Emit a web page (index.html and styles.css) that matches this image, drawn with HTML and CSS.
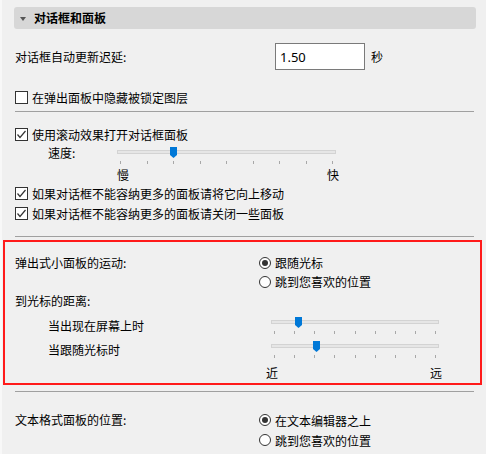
FILE: index.html
```html
<!DOCTYPE html>
<html lang="zh-CN">
<head>
    <meta charset="UTF-8">
    <meta name="viewport" content="width=device-width, initial-scale=1.0">
    <title>对话框和面板</title>
    <link rel="stylesheet" href="styles.css">
</head>
<body>
    <div class="panel">
        <div class="section-head"><span class="caret"></span>对话框和面板</div>

        <div class="delay-row">
            <span class="delay-label">对话框自动更新迟延:</span>
            <input class="num" type="text" value="1.50">
            <span class="unit">秒</span>
        </div>

        <label class="check row-a"><span class="box"></span>在弹出面板中隐藏被锁定图层</label>

        <div class="sep sep-1"></div>

        <label class="check row-b"><span class="box on"><svg viewBox="0 0 11 11"><polyline points="1.5,5.5 4,8.5 9.5,2"/></svg></span>使用滚动效果打开对话框面板</label>

        <div class="slider-row speed">
            <span class="slider-label speed-label">速度:</span>
            <div class="slider wide">
                <div class="slider-track">
                    <div class="rail"></div>
                    <div class="thumb" style="left: 53px"><svg viewBox="0 0 7 11"><polygon points="0,0 7,0 7,8 3.5,11 0,8"/></svg></div>
                </div>
                <div class="ticks"><i></i><i></i><i></i><i></i><i></i><i></i><i></i><i></i><i></i></div>
            </div>
        </div>
        <div class="scale speed-scale"><span>慢</span><span>快</span></div>

        <label class="check"><span class="box on"><svg viewBox="0 0 11 11"><polyline points="1.5,5.5 4,8.5 9.5,2"/></svg></span>如果对话框不能容纳更多的面板请将它向上移动</label>
        <label class="check"><span class="box on"><svg viewBox="0 0 11 11"><polyline points="1.5,5.5 4,8.5 9.5,2"/></svg></span>如果对话框不能容纳更多的面板请关闭一些面板</label>

        <div class="sep sep-2"></div>

        <div class="highlight">
            <div class="choice-grid">
                <span class="choice-label">弹出式小面板的运动:</span>
                <div class="radios">
                    <label class="radio-row"><span class="radio on"></span>跟随光标</label>
                    <label class="radio-row"><span class="radio"></span>跳到您喜欢的位置</label>
                </div>
            </div>

            <div class="plain-row">到光标的距离:</div>

            <div class="slider-row dist">
                <span class="slider-label dist-label">当出现在屏幕上时</span>
                <div class="slider narrow">
                    <div class="slider-track">
                        <div class="rail"></div>
                        <div class="thumb" style="left: 24px"><svg viewBox="0 0 7 11"><polygon points="0,0 7,0 7,8 3.5,11 0,8"/></svg></div>
                    </div>
                    <div class="ticks"><i></i><i></i><i></i><i></i><i></i><i></i><i></i><i></i><i></i></div>
                </div>
            </div>
            <div class="slider-row dist">
                <span class="slider-label dist-label">当跟随光标时</span>
                <div class="slider narrow">
                    <div class="slider-track">
                        <div class="rail"></div>
                        <div class="thumb" style="left: 42px"><svg viewBox="0 0 7 11"><polygon points="0,0 7,0 7,8 3.5,11 0,8"/></svg></div>
                    </div>
                    <div class="ticks"><i></i><i></i><i></i><i></i><i></i><i></i><i></i><i></i><i></i></div>
                </div>
            </div>
            <div class="scale dist-scale"><span>近</span><span>远</span></div>
        </div>

        <div class="sep sep-3"></div>

        <div class="choice-grid last">
            <span class="choice-label">文本格式面板的位置:</span>
            <div class="radios">
                <label class="radio-row tall"><span class="radio on"></span>在文本编辑器之上</label>
                <label class="radio-row tall"><span class="radio"></span>跳到您喜欢的位置</label>
            </div>
        </div>
    </div>
</body>
</html>
```

FILE: styles.css
```css
html, body {
    height: 100%;
}
body {
    margin: 0;
    padding-top: 7px;
    box-sizing: border-box;
    background: #f0f0f0;
    border-left: 2px solid #f8f8f8;
    font-family: "Noto Sans CJK SC", "Noto Sans", sans-serif;
    font-size: 12px;
    color: #000;
    overflow: hidden;
}
.panel {
    width: 459px;
    padding-left: 13px;
}
.section-head {
    height: 22px;
    line-height: 22px;
    margin: 0 -2px 0 -1px;
    background: #d7d7d7;
    border-radius: 3px;
    font-weight: bold;
    display: flex;
    align-items: center;
}
.caret {
    width: 0;
    height: 0;
    margin: 1px 8px 0 6px;
    border-left: 3px solid transparent;
    border-right: 3px solid transparent;
    border-top: 4px solid #555;
}
.delay-row {
    display: flex;
    align-items: center;
    height: 27px;
    margin-top: 14px;
}
.delay-label {
    width: 260px;
}
.num {
    width: 90px;
    height: 27px;
    box-sizing: border-box;
    margin: 0;
    padding: 0 4px;
    border: 1px solid #7a7a7a;
    background: #fff;
    font-family: "Noto Sans", sans-serif;
    font-size: 13px;
    color: #000;
    outline: none;
}
.unit {
    margin-left: 6px;
}
.check {
    display: flex;
    align-items: center;
    height: 20px;
}
.row-a {
    margin-top: 17px;
}
.row-b {
    margin-top: 12px;
}
.box {
    width: 13px;
    height: 13px;
    box-sizing: border-box;
    border: 1px solid #333;
    background: #fff;
    margin-right: 4px;
    display: flex;
    align-items: center;
    justify-content: center;
}
.box svg {
    width: 11px;
    height: 11px;
    fill: none;
    stroke: #333;
    stroke-width: 1.2;
}
.sep {
    height: 1px;
    background: #a0a0a0;
}
.sep-1 {
    margin-top: 4px;
}
.sep-2 {
    margin-top: 13px;
}
.sep-3 {
    margin-top: 6px;
}
.slider-row {
    display: flex;
    align-items: flex-start;
    height: 17px;
}
.speed {
    margin-top: 3px;
}
.slider-label {
    line-height: 12px;
}
.speed-label {
    width: 69px;
    padding-left: 33px;
}
.dist {
    margin-top: 7px;
}
.dist-label {
    width: 223px;
    padding-left: 33px;
    line-height: 17px;
}
.slider.wide {
    width: 219px;
}
.slider.narrow {
    width: 168px;
}
.slider-track {
    position: relative;
    height: 11px;
}
.rail {
    position: relative;
    top: 3px;
    height: 4px;
    box-sizing: border-box;
    background: #e6e6e6;
    border: 1px solid #d3d3d3;
}
.thumb {
    position: absolute;
    top: 0;
    width: 7px;
    height: 11px;
}
.thumb svg {
    display: block;
    width: 7px;
    height: 11px;
    fill: #0078d7;
}
.ticks {
    display: flex;
    justify-content: space-between;
    padding: 0 3px;
    margin-top: 3px;
    height: 3px;
}
.ticks i {
    width: 1px;
    height: 3px;
    background: #a8a8a8;
}
.scale {
    display: flex;
    justify-content: space-between;
}
.speed-scale {
    width: 222px;
    margin-left: 102px;
    margin-top: 2px;
    height: 17px;
    line-height: 17px;
}
.dist-scale {
    width: 176px;
    margin-left: 251px;
    margin-top: 5px;
    height: 20px;
    line-height: 20px;
}
.highlight {
    margin: 3px -8px 0 -12px;
    border: 2px solid #ff1a1a;
    padding: 11px 0 0 10px;
}
.choice-grid {
    display: grid;
    grid-template-columns: 244px 1fr;
}
.choice-grid.last {
    margin-top: 18px;
}
.choice-label {
    line-height: 19px;
}
.choice-grid.last .choice-label {
    line-height: 20px;
}
.radio-row {
    display: flex;
    align-items: center;
    height: 19px;
}
.radio-row.tall {
    height: 20px;
}
.radio {
    width: 12px;
    height: 12px;
    box-sizing: border-box;
    border: 1px solid #333;
    border-radius: 50%;
    background: #fff;
    margin-right: 4px;
    display: flex;
    align-items: center;
    justify-content: center;
}
.radio.on::after {
    content: "";
    width: 6px;
    height: 6px;
    border-radius: 50%;
    background: #333;
}
.plain-row {
    height: 19px;
    line-height: 19px;
}
```
